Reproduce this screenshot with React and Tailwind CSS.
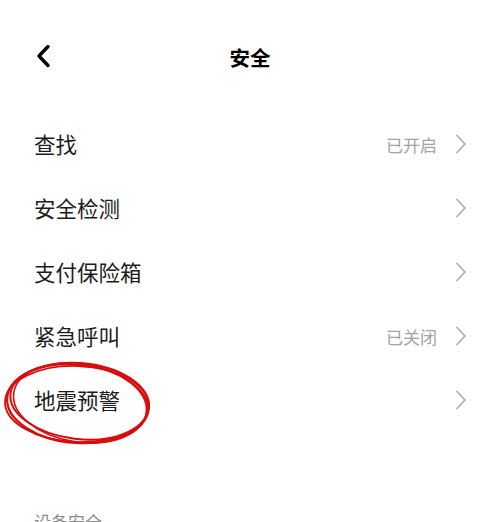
import React from "react";

const Chevron = () => (
  <svg width="12" height="20" viewBox="0 0 12 20" fill="none" className="shrink-0">
    <path d="M2 1.5 L10 10 L2 18.5" stroke="#b0b0b0" strokeWidth="1.8" strokeLinecap="round" strokeLinejoin="round" />
  </svg>
);

const Row = ({ label, value }) => (
  <div className="flex h-16 items-center justify-between pl-[34px] pr-[33px]">
    <span className="text-[21.5px] text-[#1c1c1c] leading-none">{label}</span>
    <div className="flex items-center gap-[18px]">
      {value && <span className="text-[17px] text-[#a3a3a3] leading-none">{value}</span>}
      <Chevron />
    </div>
  </div>
);

export default function App() {
  return (
    <div
      className="relative h-[522px] w-[500px] overflow-hidden bg-white"
      style={{ fontFamily: '"Noto Sans CJK SC", "Noto Sans", sans-serif' }}
    >
      <div className="relative flex h-[112px] items-center justify-center pt-[2px]">
        <svg width="16" height="24" viewBox="0 0 16 24" className="absolute left-[35px] top-[44px]" fill="none">
          <path d="M13 2.5 L4 12 L13 21.5" stroke="#000" strokeWidth="3.4" strokeLinecap="round" strokeLinejoin="round" />
        </svg>
        <span className="text-[20.5px] font-bold text-black">安全</span>
      </div>
      <Row label="查找" value="已开启" />
      <Row label="安全检测" />
      <Row label="支付保险箱" />
      <Row label="紧急呼叫" value="已关闭" />
      <Row label="地震预警" />
      <div className="pl-[34px] pt-[78px]">
        <span className="text-[17px] text-[#8a8a8a] leading-none">设备安全</span>
      </div>
      <svg
        className="pointer-events-none absolute left-0 top-[355px]"
        width="160"
        height="95"
        viewBox="0 0 160 95"
        fill="none"
      >
        <g stroke="#d80c0c" strokeLinecap="round">
          <ellipse cx="78" cy="48" rx="71" ry="40" transform="rotate(4 78 48)" strokeWidth="2.2" />
          <ellipse cx="79" cy="47" rx="69" ry="37" transform="rotate(7 79 47)" strokeWidth="2" />
          <ellipse cx="77" cy="49" rx="72" ry="38" transform="rotate(2 77 49)" strokeWidth="1.8" />
          <ellipse cx="80" cy="48" rx="67" ry="39" transform="rotate(9 80 48)" strokeWidth="1.6" />
        </g>
      </svg>
    </div>
  );
}
